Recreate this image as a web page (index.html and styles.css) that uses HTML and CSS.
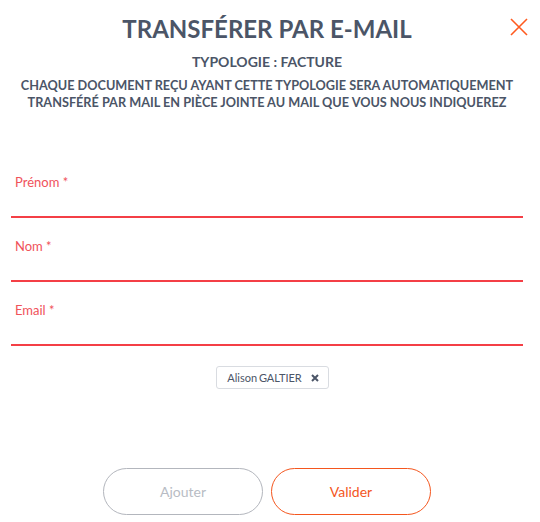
FILE: index.html
```html
<!DOCTYPE html>
<html lang="fr">
<head>
  <meta charset="UTF-8" />
  <meta name="viewport" content="width=device-width, initial-scale=1.0"/>
  <title>Transférer par e-mail</title>
  <link rel="stylesheet" href="styles.css">
</head>
<body>
  <div class="modal">
    <button class="close" aria-label="Fermer">
      <svg width="18" height="18" viewBox="0 0 18 18">
        <path d="M1 1 L17 17 M17 1 L1 17" stroke="#ff5a1f" stroke-width="1.6" fill="none" />
      </svg>
    </button>

    <div class="header">
      <h1>TRANSFÉRER PAR E-MAIL</h1>
      <h2>TYPOLOGIE : FACTURE</h2>
      <p>CHAQUE DOCUMENT REÇU AYANT CETTE TYPOLOGIE SERA AUTOMATIQUEMENT<br>TRANSFÉRÉ PAR MAIL EN PIÈCE JOINTE AU MAIL QUE VOUS NOUS INDIQUEREZ</p>
    </div>

    <form class="form">
      <div class="field">
        <label for="prenom">Prénom *</label>
        <input type="text" id="prenom" />
      </div>
      <div class="field">
        <label for="nom">Nom *</label>
        <input type="text" id="nom" />
      </div>
      <div class="field">
        <label for="email">Email *</label>
        <input type="email" id="email" />
      </div>
    </form>

    <div class="chips">
      <span class="chip">Alison GALTIER
        <svg class="chip-x" width="8" height="8" viewBox="0 0 8 8">
          <path d="M1 1 L7 7 M7 1 L1 7" stroke="#4b5567" stroke-width="2" fill="none" />
        </svg>
      </span>
    </div>

    <div class="actions">
      <button class="btn btn-grey">Ajouter</button>
      <button class="btn btn-orange">Valider</button>
    </div>
  </div>
</body>
</html>
```

FILE: styles.css
```css
* {
  box-sizing: border-box;
  margin: 0;
  padding: 0;
  font-family: 'Lato', 'Liberation Sans', sans-serif;
}

body {
  background-color: #fff;
  width: 540px;
}

.modal {
  position: relative;
  padding: 14px 17px 0 11px;
}

.close {
  position: absolute;
  top: 18px;
  right: 12px;
  background: none;
  border: none;
  width: 18px;
  height: 18px;
  cursor: pointer;
}

.close svg {
  display: block;
}

.header {
  text-align: center;
  color: #4b5567;
}

h1 {
  font-size: 24px;
  line-height: 30px;
  font-weight: bold;
}

h2 {
  margin-top: 9px;
  font-size: 14px;
  line-height: 17px;
  font-weight: bold;
}

.header p {
  margin-top: 7px;
  font-size: 12.7px;
  line-height: 17px;
  font-weight: bold;
}

.form {
  margin-top: 63px;
}

.field {
  margin-bottom: 20px;
}

.field label {
  display: block;
  padding-left: 4px;
  font-size: 13px;
  line-height: 16px;
  color: #f0525a;
}

.field input {
  display: block;
  width: 100%;
  height: 28px;
  border: none;
  border-bottom: 2px solid #f43f46;
  outline: none;
  font-size: 14px;
  background: transparent;
}

.chips {
  display: flex;
  justify-content: center;
  padding-left: 11px;
}

.chip {
  display: inline-flex;
  align-items: center;
  gap: 9px;
  height: 23px;
  padding: 0 9px 0 10px;
  border: 1px solid #d9dce1;
  border-radius: 3px;
  font-size: 11px;
  word-spacing: -1px;
  color: #4b5567;
}

.chip-x {
  display: block;
}

.actions {
  display: flex;
  justify-content: center;
  gap: 8px;
  margin-top: 79px;
}

.btn {
  width: 160px;
  height: 47px;
  border-radius: 24px;
  background: #fff;
  font-size: 14px;
  cursor: pointer;
}

.btn-grey {
  border: 1px solid #b3b6bd;
  color: #b8bcc4;
}

.btn-orange {
  border: 1px solid #f4561e;
  color: #f4561e;
}
```
